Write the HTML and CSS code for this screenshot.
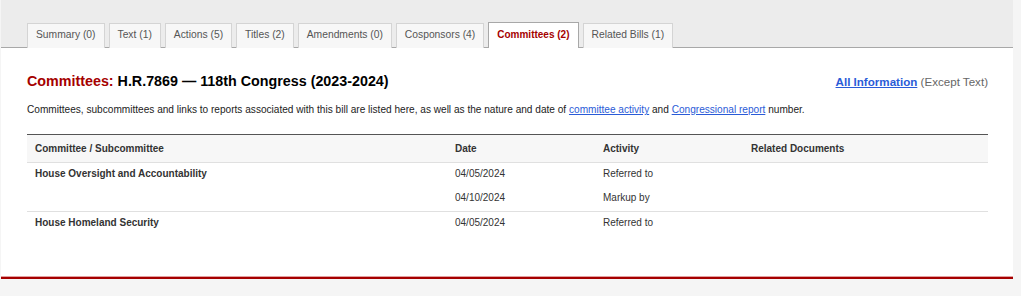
FILE: index.html
```html
<!DOCTYPE html>
<html lang="en">
<head>
	<meta charset="UTF-8">
	<title>Committees: H.R.7869</title>
	<link rel="stylesheet" href="styles.css">
</head>
<body>
	<div class="page">
		<div class="tabbar">
			<ul class="tabs">
				<li><a href="#">Summary (0)</a></li>
				<li><a href="#">Text (1)</a></li>
				<li><a href="#">Actions (5)</a></li>
				<li><a href="#">Titles (2)</a></li>
				<li><a href="#">Amendments (0)</a></li>
				<li><a href="#">Cosponsors (4)</a></li>
				<li class="active"><a href="#">Committees (2)</a></li>
				<li><a href="#">Related Bills (1)</a></li>
			</ul>
		</div>
		<div class="content">
			<div class="head">
				<h1><span class="red">Committees:</span> H.R.7869 — 118th Congress (2023-2024)</h1>
				<div class="allinfo"><a href="#">All Information</a> (Except Text)</div>
			</div>
			<p class="intro">Committees, subcommittees and links to reports associated with this bill are listed here, as well as the nature and date of <a href="#">committee activity</a> and <a href="#">Congressional report</a> number.</p>
			<table class="committees">
				<thead>
					<tr>
						<th class="c1">Committee / Subcommittee</th>
						<th class="c2">Date</th>
						<th class="c3">Activity</th>
						<th>Related Documents</th>
					</tr>
				</thead>
				<tbody class="group">
					<tr>
						<th>House Oversight and Accountability</th>
						<td>04/05/2024</td>
						<td>Referred to</td>
						<td></td>
					</tr>
					<tr>
						<th></th>
						<td>04/10/2024</td>
						<td>Markup by</td>
						<td></td>
					</tr>
				</tbody>
				<tbody class="group">
					<tr>
						<th>House Homeland Security</th>
						<td>04/05/2024</td>
						<td>Referred to</td>
						<td></td>
					</tr>
				</tbody>
			</table>
		</div>
		<div class="footline"></div>
	</div>
</body>
</html>
```

FILE: styles.css
```css
html, body{
	margin: 0;
	padding: 0;
	background: #f5f5f5;
	font-family: "Liberation Sans", Arial, sans-serif;
}
.page{
	width: 1012px;
	margin-left: 1px;
	background: #fff;
}
.tabbar{
	background: #ececec;
	padding: 22px 0 0 26px;
	border-bottom: 1px solid #a8a8a8;
}
.tabs{
	list-style: none;
	margin: 0;
	padding: 0;
	display: flex;
	gap: 4px;
	align-items: flex-end;
}
.tabs li{
	background: #f7f7f7;
	border: 1px solid #d4d4d4;
	border-bottom: none;
	margin-bottom: -1px;
	height: 24px;
}
.tabs a{
	display: block;
	padding: 0 8px;
	line-height: 22px;
	font-size: 10.3px;
	color: #555;
	text-decoration: none;
}
.tabs li.active{
	background: #fff;
	border-color: #a8a8a8;
	height: 25px;
}
.tabs li.active a{
	color: #a50000;
	font-weight: bold;
	line-height: 24px;
	padding: 0 8px;
	font-size: 10px;
}
.content{
	padding: 25px 25px 40px 26px;
}
.head{
	display: flex;
	justify-content: space-between;
	align-items: baseline;
}
h1{
	margin: 0;
	font-size: 14.3px;
	font-weight: bold;
	color: #000;
}
.red{
	color: #a50000;
}
.allinfo{
	font-size: 11.6px;
	color: #666;
}
.allinfo a{
	color: #2a5bd7;
	font-weight: bold;
}
.intro{
	margin: 15px 0 19px;
	font-size: 10.1px;
	color: #222;
}
.intro a{
	color: #2a5bd7;
}
.committees{
	width: 100%;
	border-collapse: collapse;
	border-top: 1px solid #555;
	font-size: 10px;
}
.committees thead th{
	background: #f7f7f7;
	text-align: left;
	font-weight: bold;
	color: #333;
	height: 27px;
	padding: 0 8px;
	border-bottom: 1px solid #e0e0e0;
}
.committees .c1{
	width: 404px;
}
.committees .c2{
	width: 132px;
}
.committees .c3{
	width: 132px;
}
.committees tbody th{
	text-align: left;
	font-weight: bold;
	color: #333;
}
.committees tbody th, .committees tbody td{
	height: 21px;
	padding: 0 8px 3px;
	color: #333;
}
.committees tbody.group + tbody.group tr:first-child th,
.committees tbody.group + tbody.group tr:first-child td{
	border-top: 1px solid #e0e0e0;
}
.footline{
	height: 2px;
	background: #a50000;
	border-top: 1px solid #e3a0a0;
}
```
